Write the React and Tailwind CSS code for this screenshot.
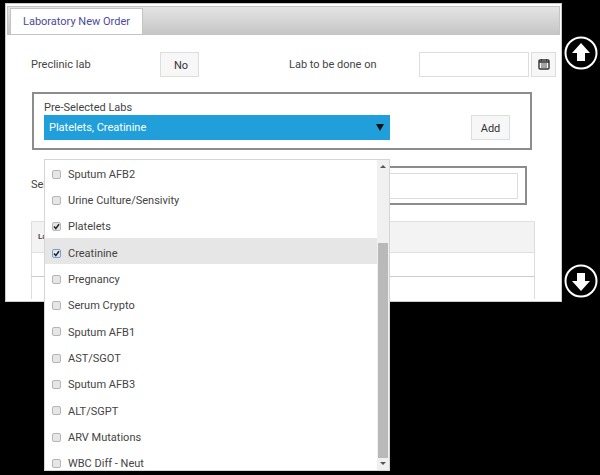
import React from 'react';

const labs = [
  { name: 'Sputum AFB2' },
  { name: 'Urine Culture/Sensivity' },
  { name: 'Platelets', checked: true },
  { name: 'Creatinine', checked: true, active: true },
  { name: 'Pregnancy' },
  { name: 'Serum Crypto' },
  { name: 'Sputum AFB1' },
  { name: 'AST/SGOT' },
  { name: 'Sputum AFB3' },
  { name: 'ALT/SGPT' },
  { name: 'ARV Mutations' },
  { name: 'WBC Diff - Neut' },
];

const CircleArrow = ({ down }) => (
  <svg width="34" height="34" viewBox="0 0 34 34" className={down ? 'rotate-180' : ''}>
    <circle cx="17" cy="17" r="15.5" fill="none" stroke="#fff" strokeWidth="2" />
    <path d="M17 7 L26 17 H21 V25 H13 V17 H8 Z" fill="#fff" />
  </svg>
);

const CalendarIcon = () => (
  <svg width="12" height="12" viewBox="0 0 12 12">
    <rect x="1" y="2" width="10" height="9" rx="1" fill="none" stroke="#333" strokeWidth="1.4" />
    <path d="M1 4h10" stroke="#333" strokeWidth="1.6" />
    <path d="M4 5v5M6 5v5M8 5v5" stroke="#555" strokeWidth="1" />
    <path d="M3.5 1v2M8.5 1v2" stroke="#333" strokeWidth="1" />
  </svg>
);

const Checkbox = ({ checked, active }) => (
  <span className={`flex h-[9px] w-[9px] shrink-0 items-center justify-center rounded-[2px] border bg-[#e6e6e6] ${active ? 'border-[#6f9fe0]' : 'border-[#b5b5b5]'}`}>
    {checked && (
      <svg width="7" height="7" viewBox="0 0 7 7">
        <path d="M1 3.6 L2.8 5.6 L6 1.2" fill="none" stroke="#222" strokeWidth="1.5" />
      </svg>
    )}
  </span>
);

const LabDropdown = () => (
  <div className="absolute left-[44px] top-[159px] flex h-[312px] w-[346px] overflow-hidden border border-[#d5d5d5] bg-white">
    <ul className="-mt-[1px] flex-1">
      {labs.map((lab) => (
        <li key={lab.name} className={`flex h-[26.3px] items-center gap-[7px] pl-[7px] pt-[4px] ${lab.active ? 'bg-[#e6e6e6]' : ''}`}>
          <Checkbox checked={lab.checked} active={lab.active} />
          <span className="pt-[2px]">{lab.name}</span>
        </li>
      ))}
    </ul>
    <div className="flex w-[12px] flex-col items-center bg-[#f0f0f0]">
      <div className="mt-[5px] h-0 w-0 border-x-[3px] border-b-[3px] border-x-transparent border-b-[#555]" />
      <div className="mt-[75px] h-[215px] w-[10px] bg-[#b9b9b9]" />
      <div className="mt-[4px] h-0 w-0 border-x-[3px] border-t-[3px] border-x-transparent border-t-[#555]" />
    </div>
  </div>
);

export default function App() {
  return (
    <div className="relative flex h-[475px] w-[600px] overflow-hidden bg-black pt-[3px] pl-[5px] font-['Roboto',sans-serif] text-[11px] text-[#444]">
      <div className="h-[299px] w-[557px] border border-[#ccc] bg-white px-[1px] pt-[2px]">
        <div className="flex h-[29px] items-end border border-[#c4c4c4] bg-gradient-to-b from-[#e4e4e4] to-[#c6c6c6] pl-[2px]">
          <div className="flex h-[26px] w-[133px] items-center justify-center border border-b-0 border-[#c4c4c4] bg-white pt-[2px] text-[#4a4a9c]">
            Laboratory New Order
          </div>
        </div>

        <div className="mt-[17px] flex h-[24px] items-center pl-[24px]">
          <span className="w-[129px] pt-[3px]">Preclinic lab</span>
          <button className="h-[25px] w-[39px] border border-[#ddd] bg-[#f7f7f7] pl-[3px] pt-[4px] text-[#333]">No</button>
          <span className="ml-[90px] w-[130px] pt-[3px]">Lab to be done on</span>
          <div className="h-[25px] w-[110px] border border-[#ddd] bg-white" />
          <button className="ml-[2px] flex h-[25px] w-[25px] items-center justify-center border border-[#ddd] bg-[#f7f7f7]">
            <CalendarIcon />
          </button>
        </div>

        <div className="mt-[16px] ml-[25px] h-[58px] w-[500px] border-2 border-[#8c8c8c] px-[10px] pt-[4px]">
          <div className="h-[17px] pt-[1px] leading-[17px]">Pre-Selected Labs</div>
          <div className="flex items-center">
            <div className="flex h-[25px] w-[346px] items-center justify-between bg-[#219fdb] px-[5px] text-white">
              <span className="pt-[2px]">Platelets, Creatinine</span>
              <span className="mr-[1px] h-0 w-0 border-x-[4px] border-t-[7px] border-x-transparent border-t-[#111]" />
            </div>
            <button className="ml-[81px] h-[25px] w-[39px] border border-[#ddd] bg-[#f7f7f7] pt-[3px] text-[#333]">Add</button>
          </div>
        </div>

        <div className="mt-[16px] ml-[24px] flex h-[39px] items-center">
          <span className="w-[50px]">Select</span>
          <div className="flex h-[39px] w-[446px] items-center border-2 border-[#8c8c8c] pl-[4px]">
            <div className="h-[26px] w-[431px] border border-[#ddd]" />
          </div>
        </div>

        <table className="mt-[16px] ml-[24px] w-[504px] border-x border-[#ddd]">
          <tbody>
            <tr className="h-[31px] border-y border-[#e0e0e0] bg-[#f3f3f3]">
              <td className="pl-[6px] text-[8px] font-semibold">Lab</td>
            </tr>
            <tr className="h-[24px] border-b border-[#ccc]">
              <td />
            </tr>
            <tr className="h-[22px]">
              <td />
            </tr>
          </tbody>
        </table>
      </div>

      <div className="flex w-[37px] flex-col items-center pt-[33px]">
        <CircleArrow />
        <div className="mt-[194px]">
          <CircleArrow down />
        </div>
      </div>

      <LabDropdown />
    </div>
  );
}
